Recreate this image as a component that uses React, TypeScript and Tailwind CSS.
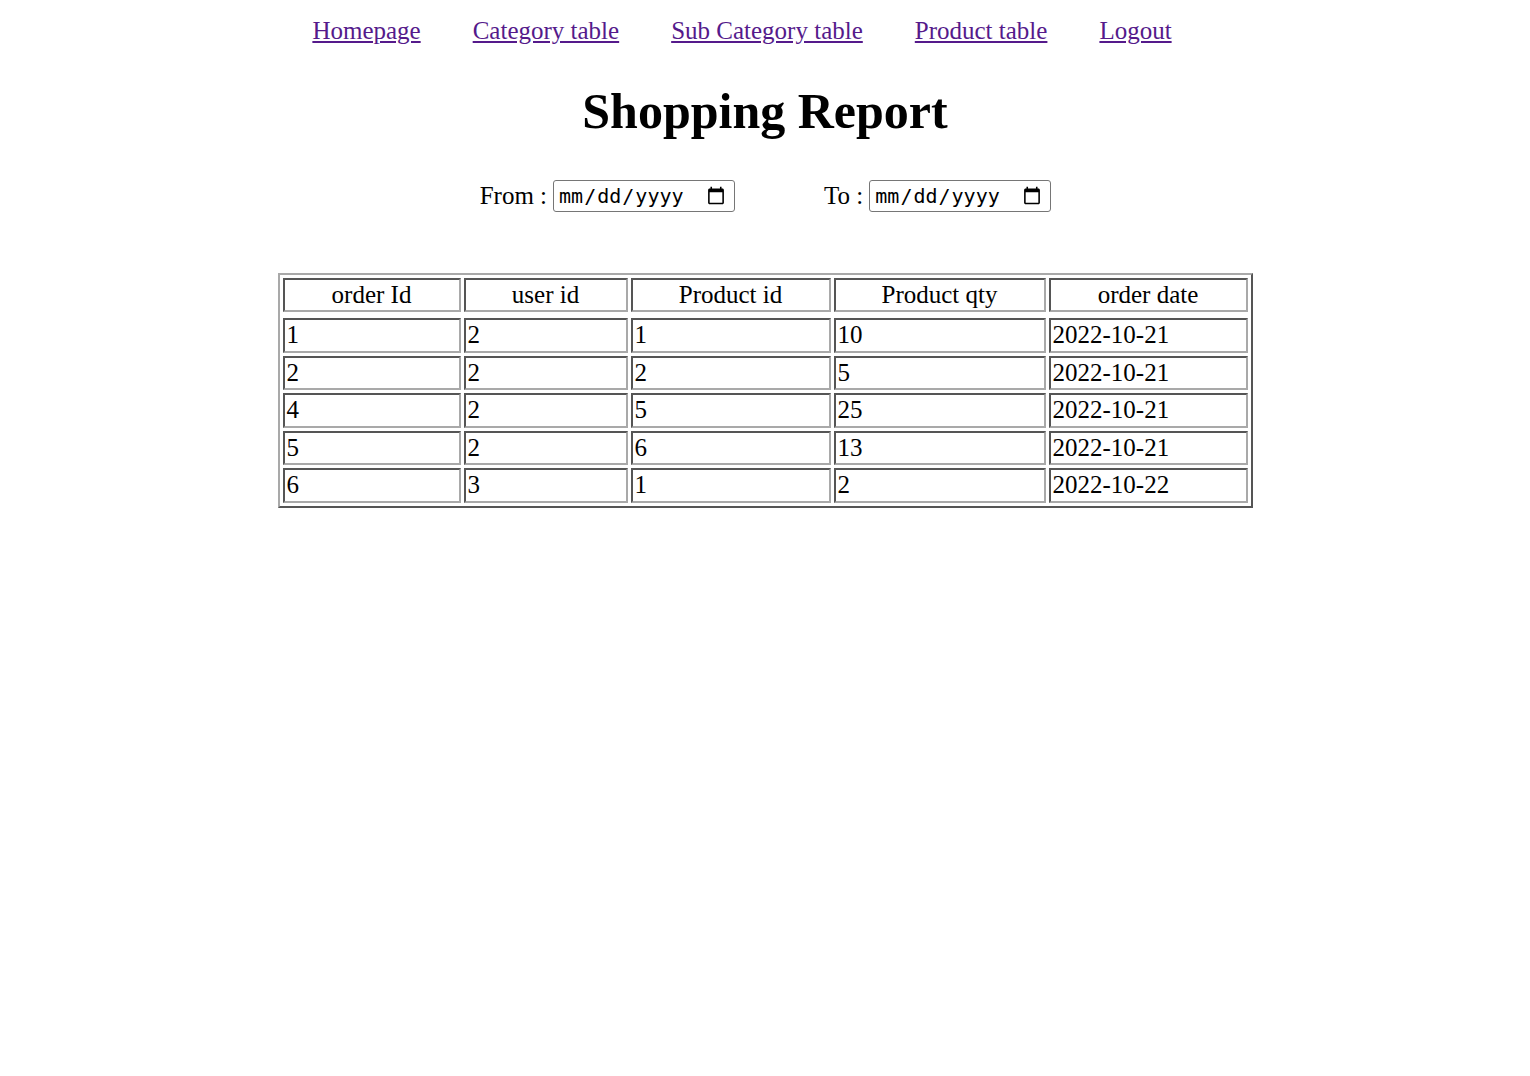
const links = ["Homepage", "Category table", "Sub Category table", "Product table", "Logout"];

const headers = [
  { label: "order Id", w: "w-[178px]" },
  { label: "user id", w: "w-[164px]" },
  { label: "Product id", w: "w-[200px]" },
  { label: "Product qty", w: "w-[212px]" },
  { label: "order date", w: "w-[199px]" },
];

const orders = [
  [1, 2, 1, 10, "2022-10-21"],
  [2, 2, 2, 5, "2022-10-21"],
  [4, 2, 5, 25, "2022-10-21"],
  [5, 2, 6, 13, "2022-10-21"],
  [6, 3, 1, 2, "2022-10-22"],
];

// inset look: dark top/left, light bottom/right
const cell =
  "h-[34.5px] border-2 border-t-[#555555] border-l-[#555555] border-b-[#a9a9a9] border-r-[#a9a9a9] px-[2px] py-0 leading-[28px] align-middle";

function DateField({ label }: { label: string }) {
  return (
    <label className="flex items-center">
      <span className="mr-[6px]">{label}</span>
      <input
        type="date"
        className="w-[182px] h-[32px] rounded-[3px] border border-[#767676] bg-white pl-[4px] pr-[6px] text-[20px] text-black font-['DejaVu_Sans_Mono',monospace]"
      />
    </label>
  );
}

export default function App() {
  return (
    <div className="min-h-screen bg-white text-black text-[25px] font-['Liberation_Serif','Times_New_Roman',serif]">
      <nav className="flex justify-center pt-[16px] pl-[6px] leading-[29px]">
        {links.map((l) => (
          <a key={l} href="#" className="mr-[52px] text-[#551a8b] underline">
            {l}
          </a>
        ))}
      </nav>

      <h1 className="mt-[38px] text-center text-[50px] font-bold leading-[57px]">Shopping Report</h1>

      <div className="mt-[37px] flex justify-center">
        <div className="flex items-center gap-[89px] pl-[1px]">
          <DateField label="From :" />
          <DateField label="To :" />
        </div>
      </div>

      <div className="mt-[58px] flex justify-center">
        <table className="w-[974px] table-fixed border-separate border-spacing-x-[3px] border-spacing-y-[3px] border-2 border-t-[#a9a9a9] border-l-[#a9a9a9] border-b-[#555555] border-r-[#555555]">
          <thead>
            <tr>
              {headers.map((h) => (
                <td key={h.label} className={`${cell} ${h.w} text-center`}>
                  {h.label}
                </td>
              ))}
            </tr>
            <tr>
              <td colSpan={5} className="h-0 p-0" />
            </tr>
          </thead>
          <tbody>
            {orders.map((row) => (
              <tr key={row[0]}>
                {row.map((v, i) => (
                  <td key={i} className={`${cell} text-left`}>
                    {v}
                  </td>
                ))}
              </tr>
            ))}
          </tbody>
        </table>
      </div>
    </div>
  );
}
